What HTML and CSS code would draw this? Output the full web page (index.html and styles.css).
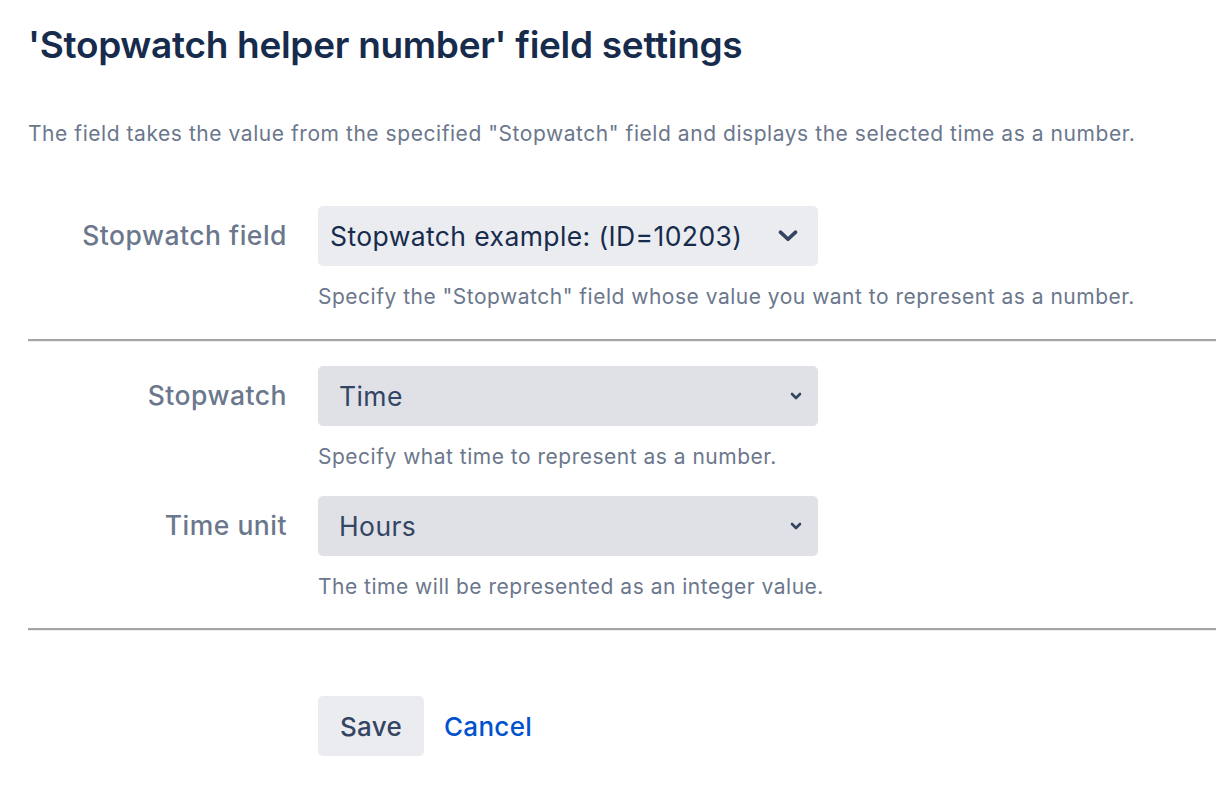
FILE: index.html
```html
<!DOCTYPE html>
<html>
<head>
<meta charset="utf-8">
<link rel="stylesheet" href="styles.css">
</head>
<body>
<div class="page">
  <h1 class="title">'Stopwatch helper number' field settings</h1>
  <p class="intro">The field takes the value from the specified "Stopwatch" field and displays the selected time as a number.</p>

  <div class="group">
    <div class="row">
      <div class="label">Stopwatch field</div>
      <div class="control">
        <div class="select select-main">
          <span class="value">Stopwatch example: (ID=10203)</span>
          <svg class="chev-big" width="26" height="26" viewBox="0 0 24 24"><path d="M5 8.5 L12 15 L19 8.5" fill="none" stroke="#344563" stroke-width="3.4" stroke-linecap="round" stroke-linejoin="round"/></svg>
        </div>
        <div class="help">Specify the "Stopwatch" field whose value you want to represent as a number.</div>
      </div>
    </div>
  </div>

  <div class="divider"></div>

  <div class="group group-mid">
    <div class="row">
      <div class="label">Stopwatch</div>
      <div class="control">
        <div class="select select-native">
          <span class="value">Time</span>
          <svg class="chev-small" width="12" height="8" viewBox="0 0 12 8"><path d="M2 2 L6 6 L10 2" fill="none" stroke="#344563" stroke-width="2.6" stroke-linecap="round" stroke-linejoin="round"/></svg>
        </div>
        <div class="help">Specify what time to represent as a number.</div>
      </div>
    </div>
    <div class="row row-next">
      <div class="label">Time unit</div>
      <div class="control">
        <div class="select select-native">
          <span class="value">Hours</span>
          <svg class="chev-small" width="12" height="8" viewBox="0 0 12 8"><path d="M2 2 L6 6 L10 2" fill="none" stroke="#344563" stroke-width="2.6" stroke-linecap="round" stroke-linejoin="round"/></svg>
        </div>
        <div class="help">The time will be represented as an integer value.</div>
      </div>
    </div>
  </div>

  <div class="divider"></div>

  <div class="actions">
    <button class="btn-save">Save</button>
    <a class="btn-cancel" href="#">Cancel</a>
  </div>
</div>
</body>
</html>
```

FILE: styles.css
```css
html, body {
  margin: 0;
  padding: 0;
  background: #ffffff;
}

body {
  font-family: Inter, "Noto Sans", sans-serif;
  color: #172b4d;
}

.page {
  padding: 21px 0 0 28px;
}

.title {
  margin: 0;
  font-size: 37px;
  line-height: 48px;
  font-weight: 600;
  color: #172b4d;
  letter-spacing: -0.3px;
}

.intro {
  margin: 51px 0 0 0;
  font-size: 21px;
  line-height: 28px;
  letter-spacing: 0.55px;
  color: #6b778c;
}

.group {
  padding-top: 58px;
  padding-bottom: 28px;
}

.group-mid {
  padding-top: 24px;
  padding-bottom: 27px;
}

.row {
  display: flex;
  align-items: flex-start;
}

.row-next {
  margin-top: 25px;
}

.label {
  width: 259px;
  flex: none;
  text-align: right;
  font-size: 26.5px;
  letter-spacing: 0.5px;
  line-height: 58px;
  color: #6b778c;
  font-weight: 500;
}

.control {
  margin-left: 31px;
  display: flex;
  flex-direction: column;
}

.select {
  width: 500px;
  height: 60px;
  box-sizing: border-box;
  border-radius: 5px;
  display: flex;
  align-items: center;
  justify-content: space-between;
  font-size: 26.5px;
  letter-spacing: 0.4px;
}

.select-main {
  background: #ebecf0;
  padding: 0 16px 0 12px;
  color: #172b4d;
}

.chev-big {
  margin-right: 1px;
}

.select-native {
  background: #dfe1e6;
  padding: 0 16px 0 21px;
  color: #344563;
}

.help {
  margin-top: 17px;
  font-size: 21px;
  letter-spacing: 0.5px;
  line-height: 28px;
  color: #6b778c;
}

.divider {
  height: 2px;
  background: #a5a5a5;
  border-bottom: 1px solid #ececec;
}

.actions {
  display: flex;
  align-items: center;
  padding: 65px 0 0 290px;
}

.btn-save {
  width: 106px;
  height: 60px;
  border: none;
  border-radius: 5px;
  background: #ebecf0;
  color: #344563;
  font-family: Inter, "Noto Sans", sans-serif;
  font-size: 26px;
  letter-spacing: 0.3px;
  font-weight: 500;
  padding: 0;
}

.btn-cancel {
  margin-left: 20px;
  font-size: 26px;
  letter-spacing: 0.3px;
  font-weight: 500;
  color: #0052cc;
  text-decoration: none;
}
```
